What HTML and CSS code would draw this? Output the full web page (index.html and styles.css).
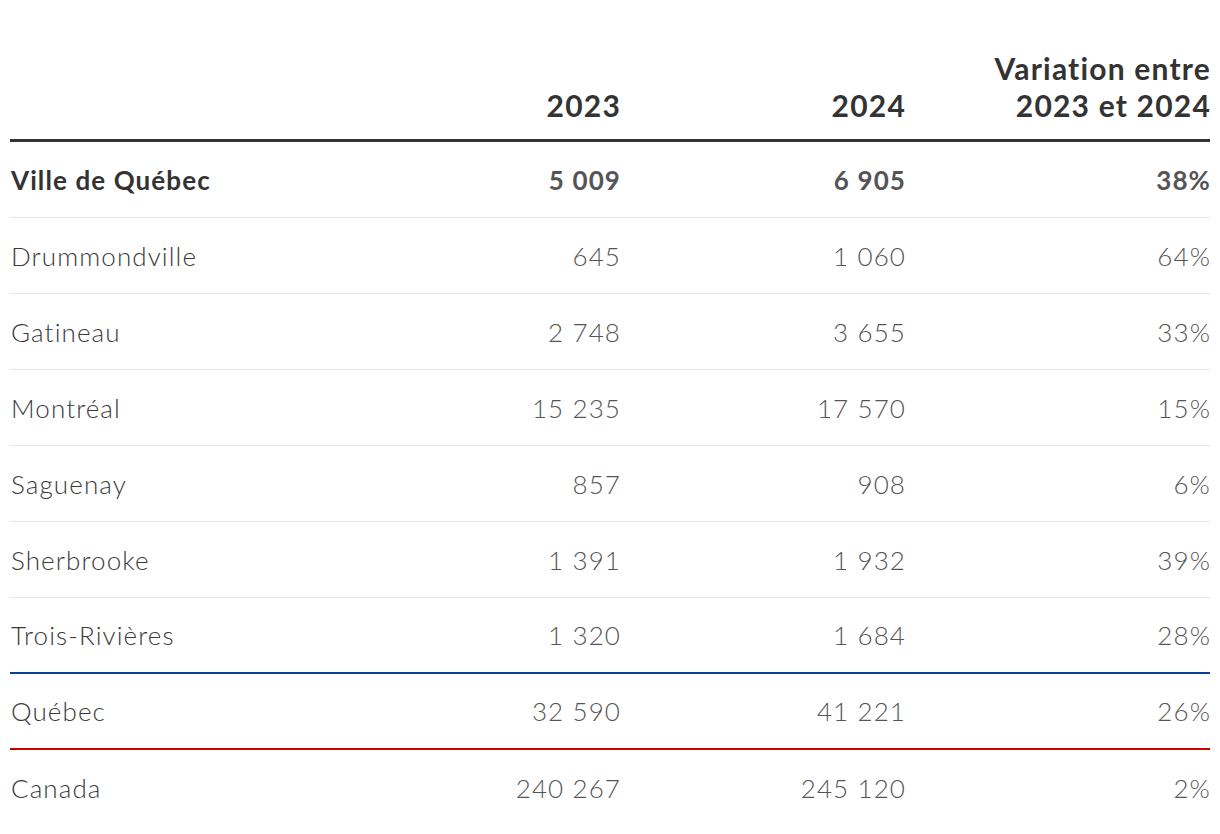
FILE: index.html
```html
<!DOCTYPE html>
<html lang="fr">
<head>
<meta charset="utf-8">
<link rel="stylesheet" href="styles.css">
</head>
<body>
<div class="table">
  <div class="row head">
    <div class="cell label"></div>
    <div class="cell num">2023</div>
    <div class="cell num">2024</div>
    <div class="cell num">Variation entre<br>2023 et 2024</div>
  </div>
  <div class="row strong">
    <div class="cell label">Ville de Québec</div>
    <div class="cell num">5 009</div>
    <div class="cell num">6 905</div>
    <div class="cell num">38%</div>
  </div>
  <div class="row">
    <div class="cell label">Drummondville</div>
    <div class="cell num">645</div>
    <div class="cell num">1 060</div>
    <div class="cell num">64%</div>
  </div>
  <div class="row">
    <div class="cell label">Gatineau</div>
    <div class="cell num">2 748</div>
    <div class="cell num">3 655</div>
    <div class="cell num">33%</div>
  </div>
  <div class="row">
    <div class="cell label">Montréal</div>
    <div class="cell num">15 235</div>
    <div class="cell num">17 570</div>
    <div class="cell num">15%</div>
  </div>
  <div class="row">
    <div class="cell label">Saguenay</div>
    <div class="cell num">857</div>
    <div class="cell num">908</div>
    <div class="cell num">6%</div>
  </div>
  <div class="row">
    <div class="cell label">Sherbrooke</div>
    <div class="cell num">1 391</div>
    <div class="cell num">1 932</div>
    <div class="cell num">39%</div>
  </div>
  <div class="row before-blue">
    <div class="cell label">Trois-Rivières</div>
    <div class="cell num">1 320</div>
    <div class="cell num">1 684</div>
    <div class="cell num">28%</div>
  </div>
  <div class="row quebec">
    <div class="cell label">Québec</div>
    <div class="cell num">32 590</div>
    <div class="cell num">41 221</div>
    <div class="cell num">26%</div>
  </div>
  <div class="row canada">
    <div class="cell label">Canada</div>
    <div class="cell num">240 267</div>
    <div class="cell num">245 120</div>
    <div class="cell num">2%</div>
  </div>
</div>
</body>
</html>
```
FILE: styles.css
```css
html, body {
  margin: 0;
  padding: 0;
  background: #ffffff;
}
body {
  font-family: "Lato", "Liberation Sans", sans-serif;
  color: #444444;
  padding: 50px 10px 0 10px;
}
.table {
  display: flex;
  flex-direction: column;
}
.row {
  display: grid;
  grid-template-columns: 1fr 285px 285px 305px;
  align-items: center;
  height: 75px;
  border-bottom: 1px solid #e6e6e6;
  font-size: 26px;
  font-weight: 300;
  letter-spacing: 1.1px;
}
.cell.num {
  text-align: right;
  color: #555555;
  margin-right: -1px;
}
.cell.label {
  padding-left: 1px;
  color: #3a3a3a;
}
.row.head {
  height: auto;
  align-items: end;
  border-bottom: 3px solid #333333;
  padding-bottom: 15px;
  font-size: 30px;
  font-weight: 700;
  line-height: 37px;
  letter-spacing: 1.2px;
}
.row.head .cell {
  color: #333333;
}
.row.strong .cell {
  font-weight: 700;
  color: #333333;
}
.row.strong .cell.num {
  color: #555555;
}
.row.before-blue {
  border-bottom: 2px solid #0b3f99;
  height: 74px;
}
.row.quebec {
  border-bottom: 2px solid #cc0000;
  height: 74px;
}
.row.canada {
  border-bottom: none;
}
```
